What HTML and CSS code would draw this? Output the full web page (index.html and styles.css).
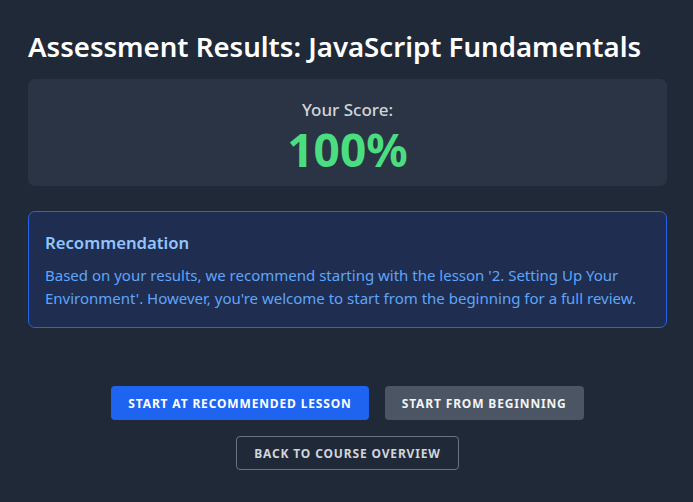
FILE: index.html
```html
<!DOCTYPE html>
<html lang="en">
<head>
<meta charset="utf-8">
<title>Assessment Results</title>
<link rel="stylesheet" href="styles.css">
</head>
<body>
<main class="page">
  <h1 class="title">Assessment Results: JavaScript Fundamentals</h1>
  <section class="score-card">
    <p class="score-label">Your Score:</p>
    <p class="score-value">100%</p>
  </section>
  <section class="rec">
    <h2 class="rec-title">Recommendation</h2>
    <p class="rec-text">Based on your results, we recommend starting with the lesson '2. Setting Up Your Environment'. However, you're welcome to start from the beginning for a full review.</p>
  </section>
  <div class="actions">
    <div class="row">
      <button class="btn btn-primary">Start at Recommended Lesson</button>
      <button class="btn btn-secondary">Start from Beginning</button>
    </div>
    <button class="btn btn-outline">Back to Course Overview</button>
  </div>
</main>
</body>
</html>
```
FILE: styles.css
```css
* { box-sizing: border-box; }
html, body { margin: 0; padding: 0; }
body {
  background: #1f2937;
  font-family: "Noto Sans", "Open Sans", sans-serif;
  color: #f3f4f6;
  width: 693px;
  height: 502px;
  overflow: hidden;
}
.page {
  padding: 28px 26px 0 28px;
}
.title {
  margin: 0;
  font-size: 27.6px;
  font-weight: 600;
  line-height: 36px;
  color: #ffffff;
}
.score-card {
  margin-top: 15px;
  background: #2a3444;
  border-radius: 7px;
  height: 107px;
  display: flex;
  flex-direction: column;
  align-items: center;
  padding-top: 20px;
}
.score-label {
  margin: 0;
  font-size: 17px;
  line-height: 22px;
  color: #d1d5db;
  font-weight: 500;
}
.score-value {
  margin: 0;
  font-size: 46px;
  line-height: 50px;
  margin-top: 3px;
  font-weight: 700;
  color: #4ade80;
}
.rec {
  margin-top: 25px;
  background: #1e2d50;
  border: 1px solid #2563eb;
  border-radius: 7px;
  padding: 20px 16px 16px 16px;
  height: 117px;
}
.rec-title {
  margin: 0;
  font-size: 16.7px;
  line-height: 22px;
  font-weight: 600;
  color: #93c5fd;
}
.rec-text {
  margin: 10px 0 0 0;
  font-size: 15px;
  line-height: 23px;
  color: #60a5fa;
}
.actions {
  margin-top: 58px;
  display: flex;
  flex-direction: column;
  align-items: center;
  gap: 16px;
}
.row {
  display: flex;
  gap: 16px;
}
.btn {
  font-family: inherit;
  font-size: 12px;
  font-weight: 700;
  text-transform: uppercase;
  letter-spacing: 0.85px;
  height: 34px;
  padding: 0 17px;
  border-radius: 4px;
  border: none;
  cursor: pointer;
}
.btn-primary { background: #1e64f0; color: #ffffff; }
.btn-secondary { background: #4b5563; color: #f3f4f6; }
.btn-outline {
  background: transparent;
  color: #d1d5db;
  border: 1px solid #6b7280;
}
```
